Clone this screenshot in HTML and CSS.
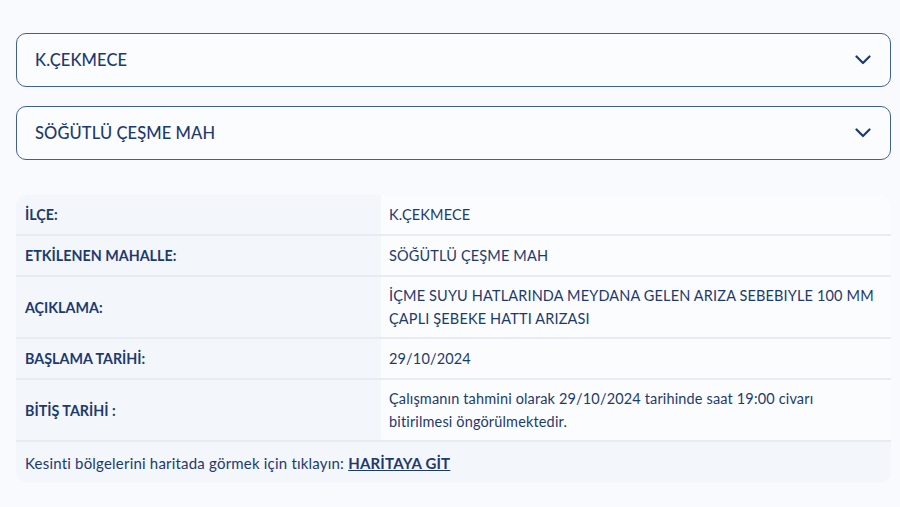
FILE: index.html
```html
<!DOCTYPE html>
<html lang="tr">
<head>
<meta charset="utf-8">
<link rel="stylesheet" href="styles.css">
</head>
<body>
<div class="page">
  <div class="select">
    <span class="select-text">K.ÇEKMECE</span>
    <svg class="chev" width="16" height="10" viewBox="0 0 16 10"><path d="M1.5 1.5 L8 8 L14.5 1.5" fill="none" stroke="#1d3a70" stroke-width="2.2" stroke-linecap="round" stroke-linejoin="round"/></svg>
  </div>
  <div class="select">
    <span class="select-text">SÖĞÜTLÜ ÇEŞME MAH</span>
    <svg class="chev" width="16" height="10" viewBox="0 0 16 10"><path d="M1.5 1.5 L8 8 L14.5 1.5" fill="none" stroke="#1d3a70" stroke-width="2.2" stroke-linecap="round" stroke-linejoin="round"/></svg>
  </div>

  <div class="card">
    <div class="row short">
      <div class="label">İLÇE:</div>
      <div class="value">K.ÇEKMECE</div>
    </div>
    <div class="row short">
      <div class="label">ETKİLENEN MAHALLE:</div>
      <div class="value">SÖĞÜTLÜ ÇEŞME MAH</div>
    </div>
    <div class="row tall">
      <div class="label">AÇIKLAMA:</div>
      <div class="value">İÇME SUYU HATLARINDA MEYDANA GELEN ARIZA SEBEBIYLE 100 MM<br>ÇAPLI ŞEBEKE HATTI ARIZASI</div>
    </div>
    <div class="row short">
      <div class="label">BAŞLAMA TARİHİ:</div>
      <div class="value">29/10/2024</div>
    </div>
    <div class="row tall">
      <div class="label">BİTİŞ TARİHİ :</div>
      <div class="value">Çalışmanın tahmini olarak 29/10/2024 tarihinde saat 19:00 civarı<br>bitirilmesi öngörülmektedir.</div>
    </div>
    <div class="foot">Kesinti bölgelerini haritada görmek için tıklayın: <a class="maplink" href="#">HARİTAYA GİT</a></div>
  </div>
</div>
</body>
</html>
```

FILE: styles.css
```css
html, body {
  margin: 0;
  padding: 0;
  background: #f9fafd;
}
body {
  font-family: "Lato", "Noto Sans", sans-serif;
  color: #1d3a70;
}
.page {
  padding: 33px 9px 0 16px;
  display: flex;
  flex-direction: column;
}
.select {
  box-sizing: border-box;
  height: 54px;
  border: 1px solid #3f5f9c;
  border-radius: 10px;
  background: #fbfcfe;
  display: flex;
  align-items: center;
  justify-content: space-between;
  padding: 0 19px 0 18px;
  margin-bottom: 19px;
}
.select-text {
  font-size: 16.5px;
  font-weight: 500;
  letter-spacing: 0.1px;
}
.chev {
  display: block;
}
.card {
  margin-top: 16px;
  border-radius: 12px;
  overflow: hidden;
  background: #f3f6fb;
}
.row {
  display: grid;
  grid-template-columns: 365px 1fr;
  border-bottom: 2px solid #e8ecf2;
}
.row.short { height: 39px; }
.row.tall { height: 60px; }
.label {
  background: #f3f6fb;
  display: flex;
  align-items: center;
  padding-left: 9px;
  font-size: 14.3px;
  font-weight: 700;
}
.value {
  background: #fbfcfe;
  display: flex;
  align-items: center;
  padding-left: 8px;
  font-size: 14.5px;
  letter-spacing: 0.15px;
  line-height: 23px;
}
.foot {
  height: 41px;
  display: flex;
  align-items: center;
  padding-left: 9px;
  font-size: 15px;
  letter-spacing: 0.2px;
  white-space: pre;
}
.maplink {
  color: #1d3a70;
  font-weight: 700;
  text-decoration: underline;
}
```
